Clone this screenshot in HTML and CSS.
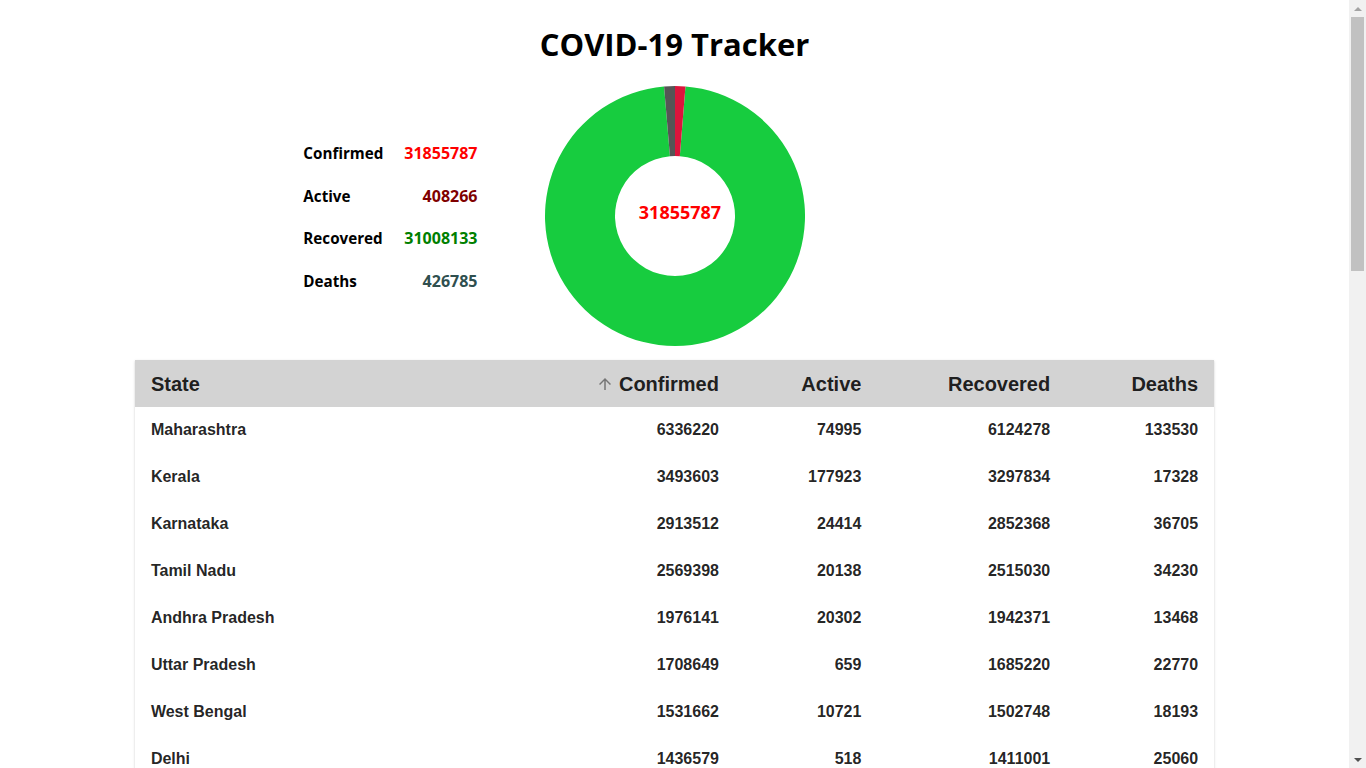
FILE: index.html
```html
<!DOCTYPE html>
<html lang="en">
<head>
<meta charset="utf-8">
<title>COVID-19 Tracker</title>
<link rel="stylesheet" href="styles.css">
</head>
<body>
<div class="app">
  <h1 class="title">COVID-19 Tracker</h1>
  <section class="summary">
    <div class="stats">
      <span class="label">Confirmed</span><span class="value confirmed">31855787</span>
      <span class="label">Active</span><span class="value active">408266</span>
      <span class="label">Recovered</span><span class="value recovered">31008133</span>
      <span class="label">Deaths</span><span class="value deaths">426785</span>
    </div>
    <div class="donut">
      <svg width="260" height="260" viewBox="0 0 260 260">
        <path fill="#17cc3f" d="M140.46 0.42 A130 130 0 1 1 119.07 0.46 L124.95 70.21 A60 60 0 1 0 134.83 70.19 Z"/>
        <path fill="#dc143c" d="M130 0 A130 130 0 0 1 140.46 0.42 L134.83 70.19 A60 60 0 0 0 130 70 Z"/>
        <path fill="#555555" d="M119.07 0.46 A130 130 0 0 1 130 0 L130 70 A60 60 0 0 0 124.95 70.21 Z"/>
      </svg>
      <span class="donut-total">31855787</span>
    </div>
    <div class="spacer"></div>
  </section>
  <div class="table-wrap">
    <table class="states">
      <colgroup>
        <col class="c-state"><col class="c-conf"><col class="c-act"><col class="c-rec"><col class="c-dea">
      </colgroup>
      <thead>
        <tr>
          <th class="left">State</th>
          <th><svg class="sort-icon" viewBox="0 0 24 24" width="18" height="18"><path d="M4 12l1.41 1.41L11 7.83V20h2V7.83l5.58 5.59L20 12l-8-8-8 8z"/></svg>Confirmed</th>
          <th>Active</th>
          <th>Recovered</th>
          <th>Deaths</th>
        </tr>
      </thead>
      <tbody>
        <tr><td class="left">Maharashtra</td><td>6336220</td><td>74995</td><td>6124278</td><td>133530</td></tr>
        <tr><td class="left">Kerala</td><td>3493603</td><td>177923</td><td>3297834</td><td>17328</td></tr>
        <tr><td class="left">Karnataka</td><td>2913512</td><td>24414</td><td>2852368</td><td>36705</td></tr>
        <tr><td class="left">Tamil Nadu</td><td>2569398</td><td>20138</td><td>2515030</td><td>34230</td></tr>
        <tr><td class="left">Andhra Pradesh</td><td>1976141</td><td>20302</td><td>1942371</td><td>13468</td></tr>
        <tr><td class="left">Uttar Pradesh</td><td>1708649</td><td>659</td><td>1685220</td><td>22770</td></tr>
        <tr><td class="left">West Bengal</td><td>1531662</td><td>10721</td><td>1502748</td><td>18193</td></tr>
        <tr><td class="left">Delhi</td><td>1436579</td><td>518</td><td>1411001</td><td>25060</td></tr>
        <tr><td class="left">Chhattisgarh</td><td>1002533</td><td>1396</td><td>987626</td><td>13511</td></tr>
        <tr><td class="left">Odisha</td><td>986276</td><td>10383</td><td>969282</td><td>6611</td></tr>
        <tr><td class="left">Rajasthan</td><td>953851</td><td>181</td><td>944715</td><td>8954</td></tr>
        <tr><td class="left">Gujarat</td><td>825149</td><td>183</td><td>814887</td><td>10077</td></tr>
      </tbody>
    </table>
  </div>
</div>
<div class="scrollbar" aria-hidden="true">
  <span class="sb-arrow sb-up"></span>
  <span class="sb-track"><span class="sb-thumb"></span></span>
  <span class="sb-arrow sb-down"></span>
</div>
</body>
</html>
```

FILE: styles.css
```css
* { box-sizing: border-box; }

body {
  margin: 0;
  background: #ffffff;
  color: #000000;
  font-family: "Open Sans", "Noto Sans", sans-serif;
  display: flex;
  align-items: flex-start;
}

.app {
  flex: 1;
  min-width: 0;
}

/* scrollbar column */
.scrollbar {
  position: sticky;
  top: 0;
  flex: 0 0 17px;
  width: 17px;
  height: 100vh;
  background: #f1f1f1;
  display: flex;
  flex-direction: column;
}

.sb-arrow {
  flex: 0 0 17px;
  display: flex;
  align-items: center;
  justify-content: center;
}

.sb-arrow::before {
  content: "";
  width: 0;
  height: 0;
  border-left: 4px solid transparent;
  border-right: 4px solid transparent;
}

.sb-up::before { border-bottom: 4px solid #a3a3a3; }
.sb-down::before { border-top: 4px solid #505050; }

.sb-track {
  flex: 1;
  padding: 0 2px;
}

.sb-thumb {
  display: block;
  height: 254px;
  background: #c1c1c1;
}

.title {
  margin: 0;
  padding-top: 22px;
  height: 66px;
  font-size: 31px;
  line-height: 44px;
  font-weight: 700;
  text-align: center;
}

.summary {
  display: grid;
  grid-template-columns: 1fr 260px 1fr;
  margin-top: 20px;
  align-items: center;
}

.stats {
  justify-self: end;
  margin-right: 67px;
  display: grid;
  grid-template-columns: auto auto;
  align-items: baseline;
  column-gap: 21px;
  row-gap: 20.4px;
  font-size: 16px;
  font-weight: 700;
  line-height: 22px;
  padding-top: 2px;
}

.label { font-size: 15.2px; }
.value { text-align: right; }
.confirmed { color: #ff0000; }
.active { color: #800000; }
.recovered { color: #008000; }
.deaths { color: #2f4f4f; }

.donut {
  position: relative;
  width: 260px;
  height: 260px;
}

.donut svg { display: block; }

.donut-total {
  position: absolute;
  left: 11px;
  right: 0;
  top: 114px;
  text-align: center;
  font-size: 18px;
  font-weight: 700;
  line-height: 24px;
  color: #ff0000;
}

.table-wrap {
  width: 80%;
  margin: 14px auto 0;
  background: #fff;
  box-shadow: 0 2px 1px -1px rgba(0,0,0,0.2), 0 1px 1px 0 rgba(0,0,0,0.14), 0 1px 3px 0 rgba(0,0,0,0.12);
}

.states {
  width: 100%;
  border-collapse: collapse;
  table-layout: fixed;
  font-family: "Liberation Sans", Arial, sans-serif;
  font-weight: 700;
  color: rgba(0,0,0,0.87);
}

.c-state { width: 39.4%; }
.c-conf { width: 16.2%; }
.c-act { width: 13.2%; }
.c-rec { width: 17.5%; }
.c-dea { width: 13.7%; }

.states th,
.states td {
  height: 47px;
  padding: 0 16px;
  text-align: right;
  vertical-align: middle;
  white-space: nowrap;
}

.states th {
  background: #d3d3d3;
  font-size: 20px;
  padding-top: 2px;
}

.states td {
  font-size: 16px;
  padding-bottom: 2px;
}

.states .left { text-align: left; }

.sort-icon {
  fill: #757575;
  display: inline-block;
  vertical-align: -2px;
  margin-right: 5px;
}
```
